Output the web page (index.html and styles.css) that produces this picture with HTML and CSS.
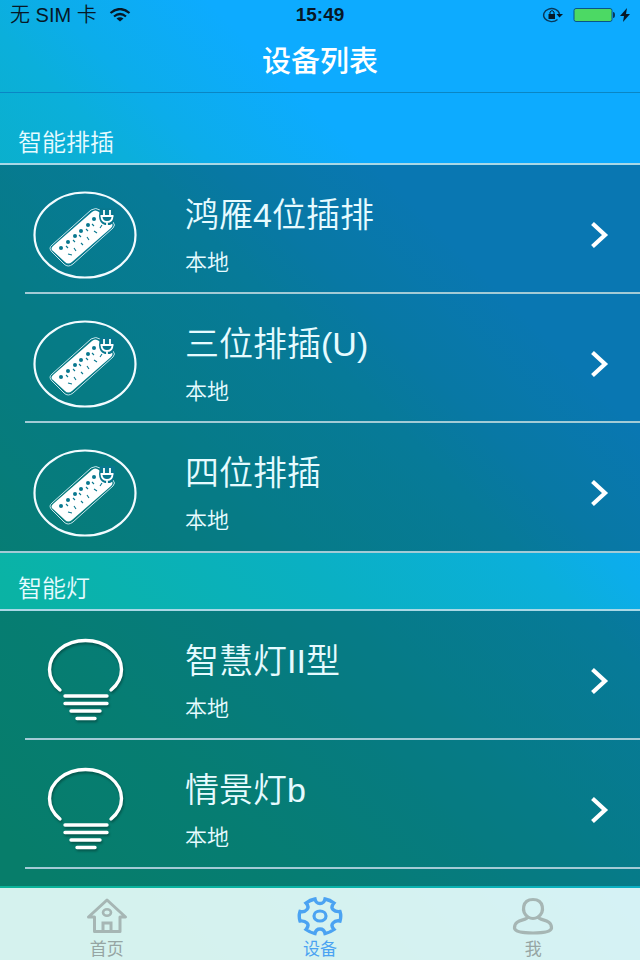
FILE: index.html
```html
<!DOCTYPE html>
<html lang="zh-CN">
<head>
<meta charset="utf-8">
<meta name="viewport" content="width=device-width, initial-scale=1">
<title>设备列表</title>
<link rel="stylesheet" href="styles.css">
</head>
<body>
<svg class="defs" aria-hidden="true">
  <symbol id="strip" viewBox="0 0 104 90">
    <ellipse cx="52" cy="45" rx="50.500" ry="42.500" fill="none" stroke="#f2fbff" stroke-width="2.200"/>
    <path d="M19 55 Q15 58 19 62 L31 74 Q35 78 40 74 L80 38 Q83 35 80 32 L67 20 Q63 17 58 20Z" fill="none" stroke="#c5e5ec" stroke-width="1"/>
    <path d="M20 56 Q17 59 20 61 L32 72 Q35 75 39 72 L78 38 Q81 35 78 32 L66 22 Q62 19 59 22Z" fill="#fff"/>
    <g fill="#08788f"><circle cx="28" cy="58" r="2"/><circle cx="35" cy="52" r="2"/><circle cx="42" cy="46" r="2"/><circle cx="48" cy="41" r="2"/><circle cx="55" cy="35" r="2"/><circle cx="61" cy="29" r="2"/></g>
    <path d="M35 64l4 1M41 58l2 3M48 53l2 2M54 47l2 3M61 41l3 2M67 38l2-3M33 56l2 2M40 50l2 2M46 45l2 2M53 39l2 2M59 34l2 2" stroke="#08788f" stroke-width="1.100"/>
    <path d="M67 18h15v8q-1 8-5 9h-5q-6-2-6-9Z" fill="#08788f"/>
    <path d="M67.500 26h13M71 26v-6M77 26v-6M68.500 26q0 6 5.500 6t5.500-6M74 32v5" fill="none" stroke="#fff" stroke-width="1.800"/>
  </symbol>
  <symbol id="bulb" viewBox="0 0 104 90">
    <path d="M27 54A36 29 0 1 1 78 54" fill="none" stroke="#fff" stroke-width="3.400" stroke-linecap="round"/>
    <path d="M32 60h42M32 67.500h42M38 75h29M44 82.500h18" stroke="#fff" stroke-width="3.400" stroke-linecap="round"/>
  </symbol>
  <symbol id="chevron" viewBox="0 0 20 30">
    <path d="M2.500 3.500L15 15L2.500 26.500" fill="none" stroke="#fff" stroke-width="4.200"/>
  </symbol>
</svg>
<div class="app">
  <header class="top">
    <div class="status">
      <div class="carrier"><span>无 SIM 卡</span>
        <svg width="22" height="14" viewBox="0 0 22 14" aria-hidden="true"><path d="M1.500 5Q11-3 20.500 5M5 8.500Q11 3.500 17 8.500" fill="none" stroke="#071826" stroke-width="2.200"/><path d="M7.500 10.500Q11 8 14.500 10.500L11 13.500Z" fill="#071826"/></svg>
      </div>
      <time>15:49</time>
      <div class="power">
        <svg width="88" height="18" viewBox="0 0 88 18" aria-hidden="true">
          <path d="M15.500 13.500A8 6.500 0 1 1 17.500 8" fill="none" stroke="#08385a" stroke-width="1.400"/><path d="M14.500 8h6.500L17.500 11.500Z" fill="#071826"/>
          <path d="M6.500 8h6.500v5H6.500Z" fill="#071826"/><path d="M8 8V6q2-3 4 0v2" fill="none" stroke="#071826"/>
          <rect x="32" y="2.500" width="38" height="13" rx="2" fill="#4cd964" stroke="#08558a"/><path d="M71 6q2 0 2 3t-2 3Z" fill="#08385a"/>
          <path d="M85 2L78 10h4l-1 6 7-8h-4Z" fill="#071826"/>
        </svg>
      </div>
    </div>
    <h1>设备列表</h1>
  </header>
  <main>
    <h2 class="first">智能排插</h2>
    <ul>
      <li><a href="#"><svg class="pic"><use href="#strip"/></svg><span class="info"><strong>鸿雁4位插排</strong><small>本地</small></span><svg class="go"><use href="#chevron"/></svg></a></li>
      <li><a href="#"><svg class="pic"><use href="#strip"/></svg><span class="info"><strong>三位排插(U)</strong><small>本地</small></span><svg class="go"><use href="#chevron"/></svg></a></li>
      <li class="last"><a href="#"><svg class="pic"><use href="#strip"/></svg><span class="info"><strong>四位排插</strong><small>本地</small></span><svg class="go"><use href="#chevron"/></svg></a></li>
    </ul>
    <h2>智能灯</h2>
    <ul class="fill">
      <li><a href="#"><svg class="pic bulb"><use href="#bulb"/></svg><span class="info"><strong>智慧灯II型</strong><small>本地</small></span><svg class="go"><use href="#chevron"/></svg></a></li>
      <li><a href="#"><svg class="pic bulb"><use href="#bulb"/></svg><span class="info"><strong>情景灯b</strong><small>本地</small></span><svg class="go"><use href="#chevron"/></svg></a></li>
    </ul>
  </main>
  <nav>
    <a href="#"><svg viewBox="0 0 46 40" aria-hidden="true"><path d="M4.500 21L23 4L41.500 21H36V35.500H10.500V21Z" fill="none" stroke="#a6b6b4" stroke-width="3" stroke-linejoin="round"/><path d="M19 35V27H27V35" fill="none" stroke="#a6b6b4" stroke-width="3"/><ellipse cx="23" cy="16.500" rx="4" ry="3.200" fill="none" stroke="#a6b6b4" stroke-width="2.600"/></svg>首页</a>
    <a href="#" class="on" aria-current="page"><svg viewBox="0 0 46 40" aria-hidden="true"><path d="M18 3Q19 7.500 23 7.500T28 3Q33 4 37 7Q33.500 11 36 13.500T43 15.500Q44.500 20 43 25Q38.500 24 36 27T37 33.500Q33 36.500 28 37.500Q27 33 23 33T18 37.500Q13 36.500 9 33.500Q12.500 29.500 10 27T3 25Q1.500 20 3 15.500Q7.500 16.500 10 13.500T9 7Q13 4 18 3Z" fill="none" stroke="#4ba3f2" stroke-width="3.400"/><ellipse cx="23" cy="20" rx="6" ry="5" fill="none" stroke="#4ba3f2" stroke-width="3.200"/></svg>设备</a>
    <a href="#"><svg viewBox="0 0 46 40" aria-hidden="true"><path d="M18 21C11 16 12 3.500 23 3.500S35 16 28 21C30 25 41.500 23 41.500 32Q41 37 23 37T4.500 32C4.500 23 16 25 18 21ZM18 21Q23 24 28 21" fill="none" stroke="#a6b6b4" stroke-width="3.200" stroke-linejoin="round"/></svg>我</a>
  </nav>
</div>
</body>
</html>
```
FILE: styles.css
```css
* { box-sizing: border-box; }
body {
  margin: 0;
  font-family: "Liberation Sans", "Noto Sans CJK SC", sans-serif;
  color: #e6fbff;
}
a { color: inherit; text-decoration: none; }
ul { list-style: none; margin: 0; padding: 0; }
.defs { position: absolute; width: 0; height: 0; }
.app {
  min-height: 100vh;
  display: flex;
  flex-direction: column;
  background: linear-gradient(225deg, #0dabff 27%, #0cadea 37%, #0bafdb 42%, #0ab0c3 56%, #0ab3a5 76%, #0bb399 92%);
}
.top { border-bottom: 1px solid #0a86c4; }
.status {
  height: 30px;
  padding: 0 10px;
  display: grid;
  grid-template-columns: 1fr auto 1fr;
  align-items: center;
  color: #071826;
  font-size: 19px;
  line-height: 30px;
}
.status time { font-weight: bold; }
.carrier { display: flex; align-items: center; gap: 12px; font-size: 20px; font-weight: 350; }
.power { display: flex; justify-content: flex-end; }
h1 {
  margin: 0;
  height: 62px;
  font-size: 29px;
  font-weight: 500;
  line-height: 64px;
  text-align: center;
  color: #fff;
}
main { flex: 1; display: flex; flex-direction: column; }
h2 {
  margin: 0;
  padding: 18px 18px 2px;
  font-size: 24px;
  font-weight: 350;
  line-height: 36px;
  border-bottom: 2px solid #a9d8e6;
}
h2.first { padding-top: 32px; }
li, .fill { background: rgba(0, 0, 0, .3); }
.fill { flex: 1; margin-bottom: 2px; }
.fill li { background: none; }
li { padding-left: 25px; }
li a {
  height: 129px;
  display: flex;
  align-items: center;
  padding: 12px 30px 0 8px;
  border-bottom: 2px solid #a3cbd6;
}
li.last { padding-left: 0; }
li.last a { height: 130px; padding-left: 33px; }
.pic { width: 104px; height: 90px; }
.bulb { filter: drop-shadow(1px 2px 1px rgba(0, 0, 0, .3)); }
.info { flex: 1; padding-left: 48px; display: flex; flex-direction: column; gap: 10px; }
.info strong { font-size: 34px; font-weight: 350; line-height: 46px; }
.info small { font-size: 22px; font-weight: 350; line-height: 30px; }
.go { width: 20px; height: 30px; }
nav {
  height: 72px;
  display: grid;
  grid-template-columns: repeat(3, 1fr);
  background: rgba(255, 255, 255, .83);
  color: #96a5a3;
  font-size: 17px;
}
nav a { display: flex; flex-direction: column; align-items: center; padding-top: 8px; line-height: 28px; }
nav svg { width: 46px; height: 40px; }
nav .on { color: #4ba3f2; }
```
